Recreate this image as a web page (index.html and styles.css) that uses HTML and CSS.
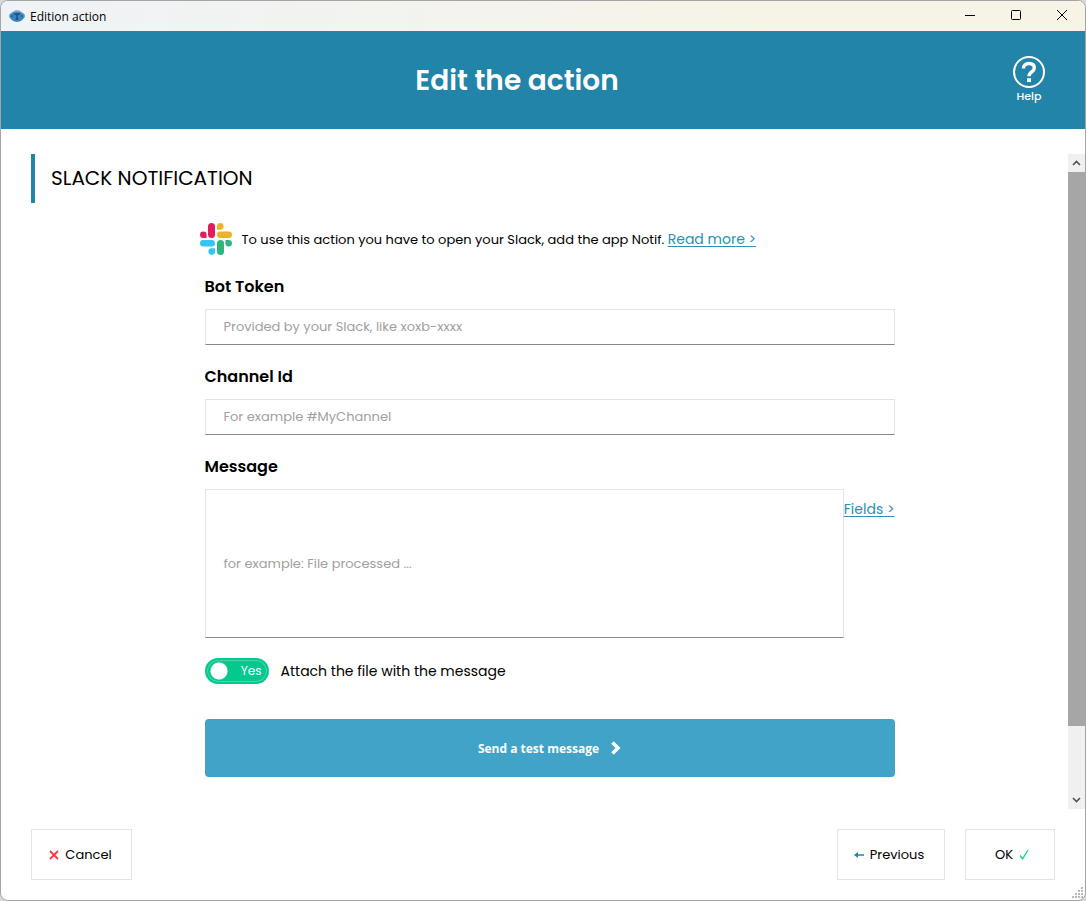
FILE: index.html
```
<!DOCTYPE html>
<html lang="en">
<head>
    <meta charset="UTF-8">
    <meta name="viewport" content="width=device-width, initial-scale=1.0">
    <title>Edition action</title>
    <link rel="stylesheet" href="styles.css">
</head>
<body>
    <div class="window">
        <div class="titlebar">
            <svg class="app-icon" width="16" height="14" viewBox="0 0 16 14">
                <ellipse cx="8" cy="5" rx="5" ry="4" fill="#a3add3"/>
                <ellipse cx="8" cy="7" rx="8" ry="4.500" fill="#5b9bd0"/>
                <ellipse cx="8" cy="8" rx="6.500" ry="5" fill="#3a86bf"/>
                <path d="M5 5h6M8 5v5M6.500 10h3" stroke="#1d4f7a" stroke-width="1.500" fill="none"/>
                <circle cx="3" cy="7" r="1.500" fill="#2a6fa8"/>
                <circle cx="13" cy="7" r="1.500" fill="#2a6fa8"/>
            </svg>
            <span class="titlebar-text">Edition action</span>
            <div class="window-controls">
                <button type="button" aria-label="Minimize">
                    <svg width="12" height="12" viewBox="0 0 12 12"><path d="M1 6.500h10" stroke="#000" fill="none"/></svg>
                </button>
                <button type="button" aria-label="Maximize">
                    <svg width="12" height="12" viewBox="0 0 12 12"><rect x="1.500" y="1.500" width="9" height="9" rx="1" stroke="#000" fill="none"/></svg>
                </button>
                <button type="button" aria-label="Close">
                    <svg width="12" height="12" viewBox="0 0 12 12"><path d="M1 1l10 10M11 1L1 11" stroke="#000" fill="none"/></svg>
                </button>
            </div>
        </div>

        <header class="header">
            <h1>Edit the action</h1>
            <a class="help" href="#help">
                <svg width="32" height="32" viewBox="0 0 32 32" fill="none" stroke="#fff">
                    <circle cx="16" cy="16" r="15" stroke-width="2"/>
                    <path d="M10.500 12.500C10.500 9 12.800 7.500 16 7.500s5.300 1.700 5.300 4.500c0 4-5.300 3.700-5.300 8.300" stroke-width="3.400"/>
                    <path d="M14 22.300h4v3.600h-4z" fill="#fff" stroke="none"/>
                </svg>
                <span>Help</span>
            </a>
        </header>

        <main class="content">
            <div class="page">
                <h2 class="section-title">SLACK NOTIFICATION</h2>

                <div class="panel">
                    <div class="info">
                        <svg width="32" height="32" viewBox="0 0 32 32">
                            <g fill="#e01e5a">
                                <rect x="8" y="0" width="7" height="15" rx="3.500"/>
                                <path d="M3.300 8.500a3.300 3.300 0 0 1 3.300 3.300v3.200H3.300a3.250 3.250 0 0 1 0-6.500z"/>
                            </g>
                            <g fill="#ecb22e">
                                <rect x="17" y="8.500" width="15" height="6.500" rx="3.250"/>
                                <path d="M17 6.700V3.400a3.300 3.300 0 1 1 3.300 3.300z"/>
                            </g>
                            <g fill="#36c5f0">
                                <rect x="0" y="17" width="15" height="6.500" rx="3.250"/>
                                <path d="M15 25.300v3.300a3.300 3.300 0 1 1-3.300-3.300z"/>
                            </g>
                            <g fill="#2eb67d">
                                <rect x="17" y="17" width="7" height="15" rx="3.500"/>
                                <path d="M28.700 23.500a3.300 3.300 0 0 1-3.300-3.300V17h3.300a3.250 3.250 0 0 1 0 6.500z"/>
                            </g>
                        </svg>
                        <p>To use this action you have to open your Slack, add the app Notif. <a class="link" href="#more">Read more &gt;</a></p>
                    </div>

                    <form class="slack-form" id="slackForm">
                        <div class="form-group">
                            <label for="token">Bot Token</label>
                            <input type="text" id="token" placeholder="Provided by your Slack, like xoxb-xxxx">
                        </div>

                        <div class="form-group">
                            <label for="channel">Channel Id</label>
                            <input type="text" id="channel" placeholder="For example #MyChannel">
                        </div>

                        <div class="form-group">
                            <label for="message">Message</label>
                            <div class="message-row">
                                <textarea id="message" placeholder="for example: File processed ..."></textarea>
                                <a class="link" href="#fields">Fields &gt;</a>
                            </div>
                        </div>

                        <label class="attach">
                            <span class="switch">
                                <input type="checkbox" id="attach" checked>
                                <span class="switch-text">Yes</span>
                            </span>
                            <span>Attach the file with the message</span>
                        </label>

                        <button type="button" class="send-btn">
                            Send a test message
                            <svg width="10" height="14" viewBox="0 0 10 14"><path d="M1.500 1.500L7 7l-5.500 5.500" stroke="#fff" stroke-width="3.500" fill="none"/></svg>
                        </button>
                    </form>
                </div>
            </div>

            <div class="scrollbar">
                <div class="scroll-arrow">
                    <svg width="9" height="6" viewBox="0 0 9 6"><path d="M1 5l3.500-3.500L8 5" stroke="#505050" stroke-width="1.600" fill="none"/></svg>
                </div>
                <div class="scroll-track"><div class="scroll-thumb"></div></div>
                <div class="scroll-arrow">
                    <svg width="9" height="6" viewBox="0 0 9 6"><path d="M1 1l3.500 3.500L8 1" stroke="#505050" stroke-width="1.600" fill="none"/></svg>
                </div>
            </div>
        </main>

        <footer class="footer">
            <button type="button" class="cancel-btn">
                <svg width="10" height="10" viewBox="0 0 10 10"><path d="M1 1l8 8M9 1L1 9" stroke="#f9393f" stroke-width="1.800" fill="none"/></svg>
                Cancel
            </button>
            <div class="footer-right">
                <button type="button" class="previous-btn">
                    <svg width="10" height="8" viewBox="0 0 10 8"><path d="M0 4l4-3v2.200h6v1.600H4V7z" fill="#2184a8"/></svg>
                    Previous
                </button>
                <button type="submit" form="slackForm" class="ok-btn">
                    OK
                    <svg width="10" height="11" viewBox="0 0 10 11"><path d="M1 6.500l2.500 3.500L9 1" stroke="#12cc94" stroke-width="1.300" fill="none"/></svg>
                </button>
            </div>
        </footer>

        <svg class="grip" width="12" height="12" viewBox="0 0 12 12" fill="#b4bac6">
            <path d="M9 0h2v2H9zM6 3h2v2H6zM9 3h2v2H9zM3 6h2v2H3zM6 6h2v2H6zM9 6h2v2H9zM0 9h2v2H0zM3 9h2v2H3zM6 9h2v2H6zM9 9h2v2H9z"/>
        </svg>
    </div>
</body>
</html>
```
FILE: styles.css
```
* {
    box-sizing: border-box;
}
body {
    margin: 0;
    background-color: #d8d8d8;
    font-family: Poppins, Inter, sans-serif;
    font-size: 13px;
    color: #000;
}
h1, h2, p {
    margin: 0;
}
button {
    font-family: inherit;
    cursor: pointer;
}
.window {
    position: relative;
    display: flex;
    flex-direction: column;
    min-height: 100vh;
    border: 1px solid #a5a5a5;
    border-radius: 8px;
    background-color: #fff;
    overflow: hidden;
}

/* Title bar */
.titlebar {
    display: flex;
    align-items: center;
    height: 30px;
    padding-left: 8px;
    background: linear-gradient(to right, #eff3f7, #f7f3e7 70%);
    font-family: "Segoe UI", "Open Sans", sans-serif;
    font-size: 12px;
}
.titlebar-text {
    flex: 1;
    margin-left: 5px;
}
.window-controls {
    display: flex;
}
.window-controls button {
    display: flex;
    align-items: center;
    justify-content: center;
    width: 46px;
    height: 30px;
    padding: 0 0 2px;
    border: none;
    background: none;
}

/* Header */
.header {
    display: flex;
    align-items: center;
    height: 98px;
    padding: 0 40px 0 20px;
    background-color: #2184a8;
    color: #fff;
}
.header h1 {
    flex: 1;
    padding-top: 2px;
    text-align: center;
    font-size: 28px;
    font-weight: 600;
}
.help {
    display: flex;
    flex-direction: column;
    align-items: center;
    color: #fff;
    font-size: 11px;
    font-weight: 500;
    line-height: 16px;
    text-decoration: none;
}

/* Content */
.content {
    display: flex;
    flex: 1;
    padding-top: 25px;
}
.page {
    flex: 1;
    padding-left: 30px;
}
.section-title {
    padding-left: 16px;
    border-left: 4px solid #2184a8;
    font-size: 20px;
    font-weight: 400;
    line-height: 49px;
}
.panel {
    max-width: 700px;
    margin: 20px auto 0;
}
.info {
    display: flex;
    align-items: center;
    gap: 10px;
    margin-bottom: 20px;
}
.link {
    color: #2b8fb8;
    font-size: 14px;
    text-underline-offset: 2px;
}
.slack-form {
    padding: 0 5px;
}
.form-group {
    margin-bottom: 20px;
}
.form-group label {
    display: block;
    margin-bottom: 10px;
    font-size: 16px;
    font-weight: 600;
    line-height: 24px;
}
.form-group input,
.form-group textarea {
    display: block;
    width: 100%;
    border: 1px solid #e3e3e3;
    border-bottom-color: #868686;
    border-radius: 1px;
    background-color: #fff;
    font-family: inherit;
    font-size: 13px;
}
.form-group input {
    height: 36px;
    padding: 0 18px;
}
.form-group textarea {
    flex: 1;
    height: 149px;
    padding: 64px 18px 0;
    line-height: 20px;
    resize: none;
}
.form-group input::placeholder,
.form-group textarea::placeholder {
    color: #a0a0a0;
}
.message-row {
    display: flex;
}
.message-row .link {
    margin-top: 10px;
    line-height: 20px;
}
.attach {
    display: flex;
    align-items: center;
    gap: 12px;
    font-size: 14px;
}
.switch {
    position: relative;
    display: flex;
}
.switch input {
    width: 64px;
    height: 26px;
    margin: 0;
    border: 2px solid #04c98f;
    border-radius: 13px;
    background: radial-gradient(circle at 12px 11px, #fff 8px, #04c98f 9px);
    box-shadow: inset 0 0 0 1px #43d7aa;
    appearance: none;
}
.switch input:not(:checked) {
    background-color: #999;
}
/* lies over the checkbox */
.switch-text {
    position: absolute;
    top: 0;
    right: 7px;
    color: #fff;
    font-size: 12px;
    line-height: 26px;
}
.send-btn {
    display: flex;
    align-items: center;
    justify-content: center;
    gap: 12px;
    width: 100%;
    height: 58px;
    margin-top: 35px;
    border: none;
    border-radius: 4px;
    background-color: #40a3c7;
    color: #fff;
    font-family: "Segoe UI", "Open Sans", sans-serif;
    font-size: 12px;
    font-weight: 700;
}

/* Scroll bar */
.scrollbar {
    display: flex;
    flex-direction: column;
    width: 17px;
    background-color: #f0f0f0;
}
.scroll-arrow {
    display: flex;
    align-items: center;
    justify-content: center;
    height: 18px;
}
.scroll-track {
    flex: 1;
    display: flex;
    flex-direction: column;
}
.scroll-thumb {
    flex: 17;
    background-color: #a6a6a6;
}
.scroll-track::after {
    content: "";
    flex: 2;
}

/* Footer */
.footer {
    display: flex;
    justify-content: space-between;
    padding: 20px 30px;
}
.footer-right {
    display: flex;
    gap: 20px;
}
.footer button {
    display: flex;
    align-items: center;
    justify-content: center;
    gap: 6px;
    height: 51px;
    padding: 0;
    border: 1px solid #e3e3e3;
    background-color: #fff;
    color: #000;
    font-size: 13px;
}
.footer .cancel-btn {
    width: 101px;
    padding-right: 2px;
}
.footer .previous-btn {
    width: 108px;
    padding-right: 4px;
}
.footer .ok-btn {
    width: 90px;
    padding-left: 4px;
}
.grip {
    position: absolute;
    right: 1px;
    bottom: 1px;
}
```
